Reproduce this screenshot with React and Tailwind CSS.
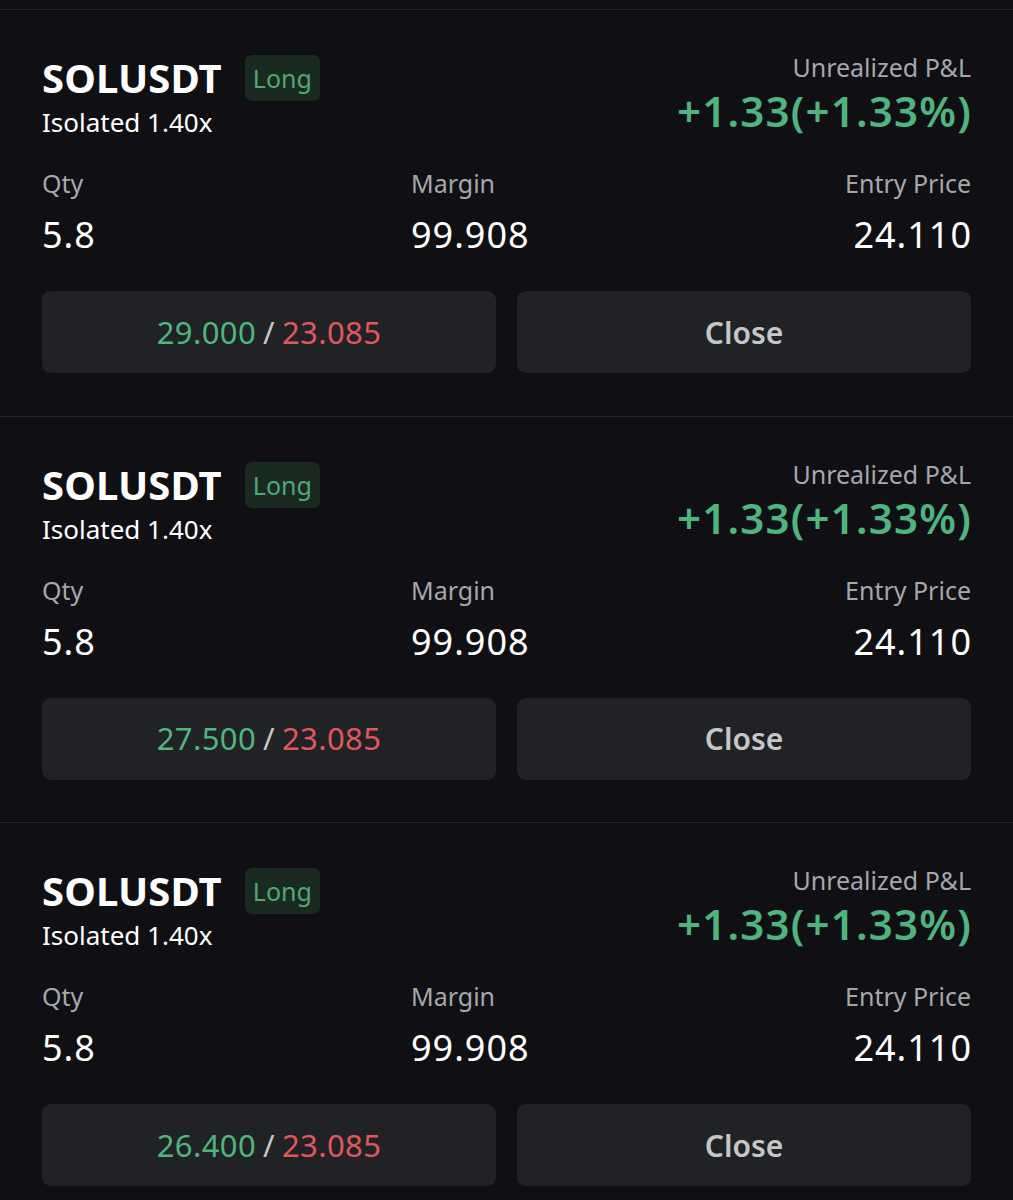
export default function App() {
  const cards = [
    { tp: "29.000" },
    { tp: "27.500" },
    { tp: "26.400" },
  ];
  return (
    <div
      className="w-full min-h-[1200px] bg-[#101014] pt-[9px] overflow-hidden"
      style={{ fontFamily: '"Noto Sans", "Open Sans", sans-serif' }}
    >
      {cards.map((c, i) => (
        <div
          key={i}
          className="box-border h-[406.5px] border-t border-[#26272c] px-[42px] pt-[42px]"
        >
          <div className="flex justify-between items-start">
            <div className="pt-[3px]">
              <div className="flex items-center h-[46px] gap-[23px]">
                <span className="text-[40px] font-bold leading-[46px] text-white tracking-[0.1px]">
                  SOLUSDT
                </span>
                <span className="h-[46px] px-[8px] rounded-[7px] bg-[#1a2a21] text-[#4ea874] text-[25px] leading-[46px]">
                  Long
                </span>
              </div>
              <div className="mt-[6px] text-[26px] leading-[30px] text-white">
                Isolated 1.40x
              </div>
            </div>
            <div className="text-right">
              <div className="text-[25px] leading-[30px] text-[#a5a7ad]">
                Unrealized P&amp;L
              </div>
              <div className="mt-[6px] text-[42px] leading-[46px] font-semibold text-[#4fb57f] tracking-[1.2px] mr-[-1px]">
                +1.33(+1.33%)
              </div>
            </div>
          </div>
          <div className="mt-[31px] flex">
            <div className="w-[369px]">
              <div className="text-[25px] leading-[30px] text-[#a5a7ad]">Qty</div>
              <div className="mt-[17px] text-[36px] leading-[40px] text-white tracking-[1px]">5.8</div>
            </div>
            <div className="flex-1">
              <div className="text-[25px] leading-[30px] text-[#a5a7ad]">Margin</div>
              <div className="mt-[17px] text-[36px] leading-[40px] text-white tracking-[1px]">99.908</div>
            </div>
            <div className="text-right">
              <div className="text-[25px] leading-[30px] text-[#a5a7ad]">Entry Price</div>
              <div className="mt-[17px] text-[36px] leading-[40px] text-white tracking-[1px] mr-[-1px]">24.110</div>
            </div>
          </div>
          <div className="mt-[36px] flex gap-[21px]">
            <div className="flex-1 h-[82px] rounded-[9px] bg-[#212226] flex items-center justify-center text-[31px] tracking-[0.4px]">
              <span className="text-[#4fb57f]">{c.tp}</span>
              <span className="text-[#c4c6ca] px-[7px]">/</span>
              <span className="text-[#e0575b]">23.085</span>
            </div>
            <div className="flex-1 h-[82px] rounded-[9px] bg-[#212226] flex items-center justify-center text-[30px] font-semibold text-[#c4c6ca]">
              Close
            </div>
          </div>
        </div>
      ))}
    </div>
  );
}
